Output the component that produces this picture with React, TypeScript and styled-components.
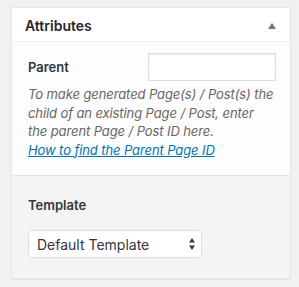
import React from 'react';
import styled, { createGlobalStyle } from 'styled-components';

const GlobalStyle = createGlobalStyle`
    body {
        margin: 0;
        background: #f1f1f1;
        font-family: Inter, "Liberation Sans", sans-serif;
        color: #23282d;
    }
`;

const Page = styled.div`
    padding: 7px 0 0 11px;
    width: 299px;
    height: 287px;
    box-sizing: border-box;
`;

const Box = styled.div`
    width: 280px;
    box-sizing: border-box;
    border: 1px solid #e5e5e5;
    background: #fff;
    box-shadow: 0 1px 1px rgba(0, 0, 0, 0.04);
`;

const Header = styled.div`
    display: flex;
    align-items: center;
    justify-content: space-between;
    height: 34px;
    padding: 2px 13px 0 13px;
    box-sizing: border-box;
    border-bottom: 1px solid #eee;
`;

const Title = styled.h2`
    margin: 0;
    font-size: 14px;
    font-weight: 600;
    color: #23282d;
`;

const Toggle = styled.span`
    width: 0;
    height: 0;
    border-left: 4px solid transparent;
    border-right: 4px solid transparent;
    border-bottom: 6px solid #72777c;
    margin-right: 1px;
`;

const Section = styled.div<{ $muted?: boolean }>`
    padding: ${p => (p.$muted ? '18px 16px 20px' : '11px 14px 16px 16px')};
    background: ${p => (p.$muted ? '#f4f4f4' : '#fdfdfd')};
    border-top: ${p => (p.$muted ? '1px solid #e5e5e5' : 'none')};
`;

const FieldRow = styled.div`
    display: flex;
    align-items: center;
    justify-content: space-between;
`;

const Label = styled.label`
    font-size: 13px;
    font-weight: 600;
    color: #32373c;
`;

const TextInput = styled.input`
    width: 128px;
    height: 28px;
    box-sizing: border-box;
    border: 1px solid #ddd;
    background: #fff;
    box-shadow: inset 0 1px 2px rgba(0, 0, 0, 0.07);
    padding: 3px 5px;
    font: inherit;
`;

const Description = styled.p`
    margin: 4px 0 0;
    font-size: 13px;
    font-style: italic;
    line-height: 18.5px;
    letter-spacing: -0.1px;
    white-space: nowrap;
    color: #666;
`;

const HelpLink = styled.a`
    color: #0073aa;
    text-decoration: underline;
`;

const SelectWrap = styled.div`
    margin-top: 16px;
    width: 174px;
    height: 28px;
    box-sizing: border-box;
    border: 1px solid #ddd;
    border-radius: 4px;
    background: #fff;
    display: flex;
    align-items: center;
    justify-content: space-between;
    padding: 0 6px 0 8px;
    font-size: 14px;
    color: #32373c;
`;

const Arrows = () => (
    <svg width="6" height="12" viewBox="0 0 6 12">
        <path d="M3 0 L6 4.5 H0 Z" fill="#32373c" />
        <path d="M3 12 L6 7.5 H0 Z" fill="#32373c" />
    </svg>
);

export default function App() {
    return (
        <Page>
            <GlobalStyle />
            <Box>
                <Header>
                    <Title>Attributes</Title>
                    <Toggle />
                </Header>

                {/* Parent */}
                <Section>
                    <FieldRow>
                        <Label>Parent</Label>
                        <TextInput type="text" />
                    </FieldRow>
                    <Description>
                        To make generated Page(s) / Post(s) the
                        <br />
                        child of an existing Page / Post, enter
                        <br />
                        the parent Page / Post ID here.
                        <br />
                        <HelpLink href="#">How to find the Parent Page ID</HelpLink>
                    </Description>
                </Section>

                {/* Template */}
                <Section $muted>
                    <Label>Template</Label>
                    <SelectWrap>
                        <span>Default Template</span>
                        <Arrows />
                    </SelectWrap>
                </Section>
            </Box>
        </Page>
    );
}
